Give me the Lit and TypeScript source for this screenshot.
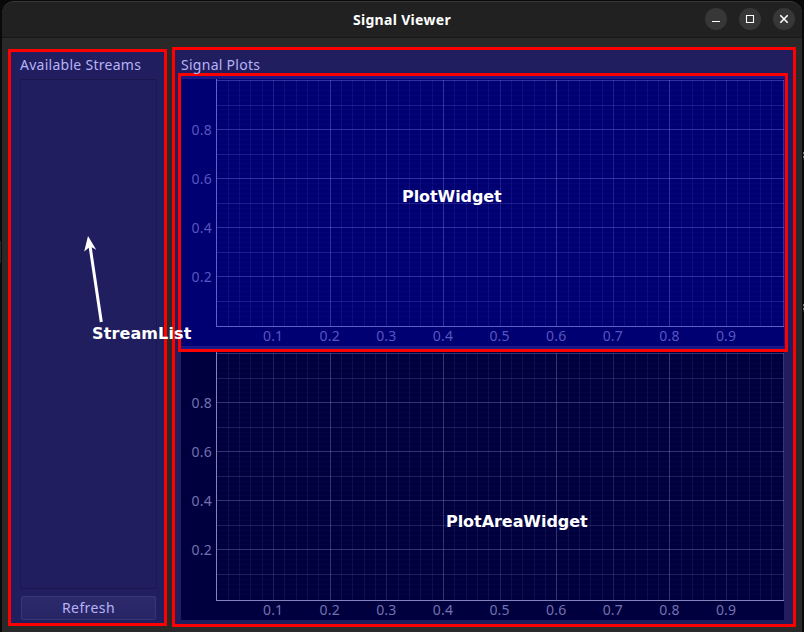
import { LitElement, html, svg, css } from "lit";
import { customElement, property } from "lit/decorators.js";

const range = (n: number) => Array.from({ length: n }, (_, i) => i);

@customElement("signal-plot")
class SignalPlot extends LitElement {
  @property({ type: Number }) height = 267;
  @property({ type: Number }) top = 1;
  @property({ type: Number }) base = 247;

  static styles = css`
    :host { display: block; width: 603px; color: #7877bd; background: var(--plot-bg); }
    svg { display: block; }
    rect { fill: var(--grid); shape-rendering: crispEdges; }
    .axis { fill: var(--axis); }
    text { font: 14px "Noto Sans", sans-serif; letter-spacing: 0.2px; fill: var(--tick); }
  `;

  render() {
    const left = 35, w = 566.2;
    const h = 245.5;
    const vertical = range(50).map((k) => {
      const i = k + 1;
      const o = i % 10 === 0 ? 0.37 : i % 5 === 0 ? 0.22 : 0.11;
      return svg`<rect x=${Math.round(left + 0.5 + (w * i) / 50)} y=${this.top} width="1" height=${this.base - this.top} opacity=${o}></rect>`;
    });
    const horizontal = range(50).map((i) => {
      const o = i % 10 === 0 ? 0.37 : i % 5 === 0 ? 0.22 : 0.03;
      return svg`<rect x=${left + 1} y=${Math.round(this.top + (h * i) / 50)} width="567" height="1" opacity=${o}></rect>`;
    });
    return html`<svg width="603" height=${this.height}>
      ${vertical}${horizontal}
      <rect class="axis" x=${left} y="0" width="1" height=${this.base + 1}></rect>
      <rect class="axis" x=${left} y=${this.base} width="568" height="1"></rect>
      ${[2, 4, 6, 8].map((v) => svg`<text x="31" y=${Math.round(this.top + (h * (10 - v)) / 10) + 6} text-anchor="end">0.${v}</text>`)}
      ${range(9).map((v) => svg`<text x=${left + 0.5 + (w * (v + 1)) / 10} y=${this.base + 15} text-anchor="middle">0.${v + 1}</text>`)}
    </svg>`;
  }
}

@customElement("app-root")
class AppRoot extends LitElement {
  static styles = css`
    :host { display: block; width: 804px; height: 632px; overflow: hidden; background: #090909; position: relative;
      font-family: "Noto Sans", sans-serif; }
    * { box-sizing: border-box; }
    .window { margin: 0 2px; height: 632px; padding-top: 1px; }
    .frame { height: 631px; background: #292929; border-radius: 12px 12px 0 0; overflow: hidden; }
    header { height: 37px; background: #212121; border-top: 1px solid #373737; border-bottom: 1px solid #171717;
      display: grid; grid-template-columns: 1fr auto 1fr; align-items: center; border-radius: 12px 12px 0 0; }
    h1 { grid-column: 2; margin: 0; font: 700 14px/20px "Noto Sans", sans-serif; letter-spacing: 0.32px; color: #fff; }
    .controls { display: flex; gap: 12px; justify-content: flex-end; padding: 0 7px 2px 0; }
    .control { width: 22px; height: 22px; border-radius: 50%; background: #373737; }
    .control svg { display: block; }
    main { display: flex; align-items: flex-start; padding: 9px 0 0 6px; }
    .panel { border: 3px solid #f00; background: #211e60; color: #b6b3f6; }
    .streams { width: 159px; height: 577px; margin-top: 2px; padding: 3px 7px 3px 9px; display: flex; flex-direction: column; }
    .label { font-size: 14px; line-height: 20px; letter-spacing: 0.27px; white-space: nowrap; }
    .list { height: 510px; margin-top: 4px; border: 1px solid #1b184f; border-radius: 1px; }
    .refresh { height: 24px; margin: 7px 1px 0 1px; border: 1px solid #3a3777; border-radius: 2px; padding: 0;
      background: linear-gradient(#2d2a6c, #282565); color: #b6b3f6; font: 14px/20px "Noto Sans", sans-serif; letter-spacing: 0.4px; }
    .plots { width: 624px; height: 580px; margin-left: 5px; padding: 5px 0 0 3px; }
    .plots .label { padding-left: 3px; }
    .selected { width: 610px; height: 279px; margin-top: -2px; border: 3px solid #f00; background: #1b1886; padding-top: 3px; }
    .first { --plot-bg: #000072; --grid: #8583ed; --axis: #6260c7; --tick: #5855bf; }
    .second { --plot-bg: #00003f; --grid: #8e8bc9; --axis: #8582bd; --tick: #7471b0; margin-left: 3px; }
    .note { position: absolute; font: 700 16px/20px "DejaVu Sans", sans-serif; color: #fff; white-space: nowrap; }
    .stream-note { left: 92px; top: 324px; letter-spacing: 0.12px; }
    .plot-note { left: 402px; top: 187px; letter-spacing: -0.07px; }
    .area-note { left: 446px; top: 512px; letter-spacing: -0.05px; }
    .arrow { position: absolute; left: 80px; top: 232px; }
    .sliver { position: absolute; }
    .left-edge { left: 0; top: 241px; width: 1px; height: 22px; background: #252525; }
    .mark { left: 803px; width: 1px; height: 8px; background: repeating-linear-gradient(#778 0 2px, #222 2px 4px); }
    .mark-a { top: 152px; }
    .mark-b { top: 304px; }
  `;

  render() {
    return html`
      <div class="window"><div class="frame">
        <header>
          <h1>Signal Viewer</h1>
          <div class="controls">
            <div class="control"><svg width="22" height="22"><path d="M7 13.5h8" stroke="#fff" fill="none"></path></svg></div>
            <div class="control"><svg width="22" height="22"><path d="M7.5 7.5h7v7h-7z" stroke="#fff" fill="none" stroke-width="1.1"></path></svg></div>
            <div class="control"><svg width="22" height="22"><path d="M7.3 7.3l7.4 7.4M14.7 7.3l-7.4 7.4" stroke="#fff" fill="none" stroke-width="1.6"></path></svg></div>
          </div>
        </header>
        <main>
          <section class="panel streams">
            <div class="label">Available Streams</div>
            <div class="list"></div>
            <button class="refresh">Refresh</button>
          </section>
          <section class="panel plots">
            <div class="label">Signal Plots</div>
            <div class="selected"><signal-plot class="first" .height=${267} .top=${1} .base=${247}></signal-plot></div>
            <signal-plot class="second" .height=${268} .top=${1} .base=${248}></signal-plot>
          </section>
        </main>
      </div></div>
      <svg class="arrow" width="30" height="92">
        <path d="M21.3 90L10 14" stroke="#fff" stroke-width="3" fill="none"></path>
        <path d="M8 4L16.2 17.8L10.3 14.5L4.2 19.6Z" fill="#fff"></path>
      </svg>
      <div class="note stream-note">StreamList</div>
      <div class="note plot-note">PlotWidget</div>
      <div class="note area-note">PlotAreaWidget</div>
      <div class="sliver left-edge"></div>
      <div class="sliver mark mark-a"></div>
      <div class="sliver mark mark-b"></div>
    `;
  }
}
